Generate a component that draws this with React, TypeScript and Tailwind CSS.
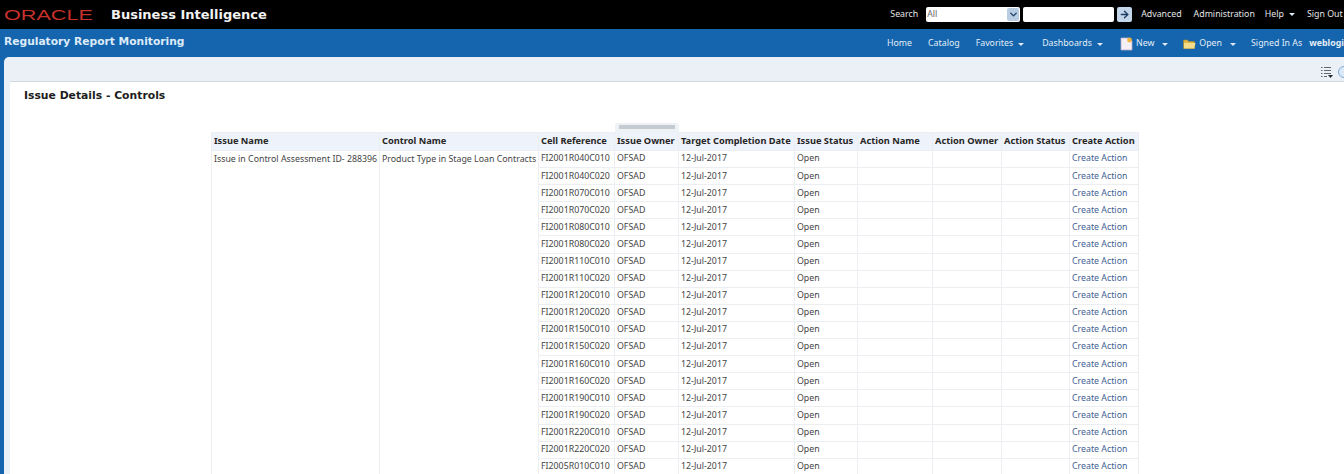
import { ChevronDown, ArrowRight } from 'lucide-react'

const columns = [
  { label: 'Issue Name', width: 'w-[168px]' },
  { label: 'Control Name', width: 'w-[159px]' },
  { label: 'Cell Reference', width: 'w-[76px]' },
  { label: 'Issue Owner', width: 'w-[64px]' },
  { label: 'Target Completion Date', width: 'w-[116px]' },
  { label: 'Issue Status', width: 'w-[63px]' },
  { label: 'Action Name', width: 'w-[75px]' },
  { label: 'Action Owner', width: 'w-[69px]' },
  { label: 'Action Status', width: 'w-[68px]' },
  { label: 'Create Action', width: 'w-[69px]' },
]

const cells = [
  'FI2001R040C010', 'FI2001R040C020', 'FI2001R070C010', 'FI2001R070C020',
  'FI2001R080C010', 'FI2001R080C020', 'FI2001R110C010', 'FI2001R110C020',
  'FI2001R120C010', 'FI2001R120C020', 'FI2001R150C010', 'FI2001R150C020',
  'FI2001R160C010', 'FI2001R160C020', 'FI2001R190C010', 'FI2001R190C020',
  'FI2001R220C010', 'FI2001R220C020', 'FI2005R010C010',
]

function Caret() {
  return <span className="ml-[5px] inline-block w-0 h-0 align-middle border-x-[3px] border-x-transparent border-t-[3px] border-t-[#dfe9f5]" />
}

function NavSep() {
  return <span className="w-px h-[15px] bg-[#8db4da]" />
}

function NewIcon() {
  return (
    <svg width="13" height="14" viewBox="0 0 13 14">
      <path d="M1 1h8l3 3v9H1z" fill="#f4f0f6" stroke="#b9a9c9" strokeWidth="0.8" />
      <circle cx="9.5" cy="3" r="2.4" fill="#f2b33d" />
    </svg>
  )
}

function FolderIcon() {
  return (
    <svg width="13" height="12" viewBox="0 0 13 12">
      <path d="M0.5 2h4l1 1.5h6V10.5h-11z" fill="#e0b84a" stroke="#a98526" strokeWidth="0.6" />
      <path d="M1 5h11.5l-1.2 5.5H1z" fill="#f3dc8a" />
    </svg>
  )
}

function ListIcon() {
  return (
    <svg width="14" height="12" viewBox="0 0 14 12" className="text-[#5b6670]">
      <path d="M1 1.5h1.5M4 1.5h7M1 4.5h1.5M4 4.5h7M1 7.5h1.5M4 7.5h7M1 10.5h1.5M4 10.5h3" stroke="currentColor" strokeWidth="1" />
      <path d="M8 9h5l-2.5 3z" fill="#1f2933" />
    </svg>
  )
}

export default function App() {
  return (
    <div className="w-[1344px] h-[474px] overflow-hidden bg-[#1565ae] font-['Noto_Sans',sans-serif]">
      {/* top bar */}
      <div className="h-[29px] bg-black flex items-center text-white">
        <span className="ml-[4px] w-[68px] origin-left scale-x-[1.44] font-['Liberation_Sans',sans-serif] text-[15px] leading-none text-[#c8312c]">ORACLE</span>
        <span className="ml-[39px] text-[13px] font-bold font-['DejaVu_Sans',sans-serif] text-[#f2f2f2]">Business Intelligence</span>
        <div className="ml-auto flex items-center text-[8.8px] text-[#e6e6e6] whitespace-nowrap">
          <span className="mr-[8px]">Search</span>
          <div className="w-[94px] h-[15px] bg-white rounded-[2px] flex items-center justify-between text-[#666] pl-[1px]">
            All
            <span className="w-[12px] h-[13px] mr-[1px] bg-[#b9cde2] rounded-[2px] flex items-center justify-center">
              <ChevronDown size={11} strokeWidth={3} className="text-[#1d3f66]" />
            </span>
          </div>
          <div className="ml-[3px] w-[91px] h-[15px] bg-white rounded-[2px]" />
          <span className="ml-[3px] w-[15px] h-[15px] bg-[#c3d6ea] rounded-[2px] flex items-center justify-center">
            <ArrowRight size={11} strokeWidth={3} className="text-[#1d3f66]" />
          </span>
          <span className="ml-[9px]">Advanced</span>
          <span className="ml-[12px]">Administration</span>
          <span className="ml-[10px]">Help<Caret /></span>
          <span className="ml-[12px] mr-[1px] w-[36px]">Sign Out</span>
        </div>
      </div>

      {/* blue bar */}
      <div className="h-[28px] flex items-center pb-[1px] text-[#e4eef8] whitespace-nowrap">
        <span className="ml-[4px] text-[10.7px] font-bold font-['DejaVu_Sans',sans-serif] text-[#dcebf8]">Regulatory Report Monitoring</span>
        <div className="ml-auto flex items-center gap-[8px] text-[8.8px] pt-[3px] w-[457px] overflow-hidden">
          <span>Home</span>
          <NavSep />
          <span>Catalog</span>
          <NavSep />
          <span className="mr-[2px]">Favorites<Caret /></span>
          <NavSep />
          <span className="mr-[1px]">Dashboards<Caret /></span>
          <NavSep />
          <span className="flex items-center gap-[3px] -mr-[1px]"><NewIcon />New<Caret /></span>
          <NavSep />
          <span className="flex items-center gap-[3px] -mr-[1px]"><FolderIcon />Open<Caret /></span>
          <NavSep />
          <span className="-mr-[1px]">Signed In As</span>
          <span className="font-bold">weblogic</span>
        </div>
      </div>

      {/* page panel */}
      <div className="ml-[4px] h-[417px] rounded-tl-[5px] bg-[#eaf0f5] flex flex-col overflow-hidden">
        <div className="h-[24px] shrink-0 flex items-center justify-end gap-[4px] pt-[6px] -mr-[6px]">
          <ListIcon />
          <span className="w-[12px] h-[12px] rounded-full border border-[#7fa9d2] bg-[#dbe9f6]" />
        </div>
        <div className="relative flex-1 ml-[6px] bg-white border-t border-[#d4d9dd]">
          <h1 className="pl-[14px] pt-[6px] text-[10.8px] leading-[16px] font-bold font-['DejaVu_Sans',sans-serif] text-[#1d1d1d]">Issue Details - Controls</h1>

          {/* splitter handle over the table */}
          <div className="absolute left-[605px] top-[41px] w-[64px] h-[10px] bg-[#eef2f6] rounded-t-[3px] flex justify-center pt-[2px]">
            <span className="w-[56px] h-[4px] bg-[#c4cbd1]" />
          </div>

          <table className="ml-[201px] mt-[28px] table-fixed border-collapse w-[927px] text-[8.8px] text-[#444] whitespace-nowrap">
            <thead>
              <tr className="h-[18px] bg-[#eef2fb]">
                {columns.map(col => (
                  <th key={col.label} className={`${col.width} border border-[#eceef2] px-[2px] pb-[2px] text-left font-bold text-[9.25px] text-[#262626] overflow-hidden`}>
                    {col.label}
                  </th>
                ))}
              </tr>
            </thead>
            <tbody>
              {cells.map((cell, i) => (
                <tr key={cell} className="h-[17.1px]">
                  {i === 0 && (
                    <>
                      <td rowSpan={cells.length} className="border border-[#eceef2] px-[2px] align-top pt-[2px]">Issue in Control Assessment ID- 288396</td>
                      <td rowSpan={cells.length} className="border border-[#eceef2] px-[2px] align-top pt-[2px]">Product Type in Stage Loan Contracts</td>
                    </>
                  )}
                  <td className="border border-[#eceef2] px-[2px]">{cell}</td>
                  <td className="border border-[#eceef2] px-[2px]">OFSAD</td>
                  <td className="border border-[#eceef2] px-[2px]">12-Jul-2017</td>
                  <td className="border border-[#eceef2] px-[2px]">Open</td>
                  <td className="border border-[#eceef2] px-[2px]"></td>
                  <td className="border border-[#eceef2] px-[2px]"></td>
                  <td className="border border-[#eceef2] px-[2px]"></td>
                  <td className="border border-[#eceef2] px-[2px] text-[#3f5f94]">Create Action</td>
                </tr>
              ))}
            </tbody>
          </table>
        </div>
      </div>
    </div>
  )
}
